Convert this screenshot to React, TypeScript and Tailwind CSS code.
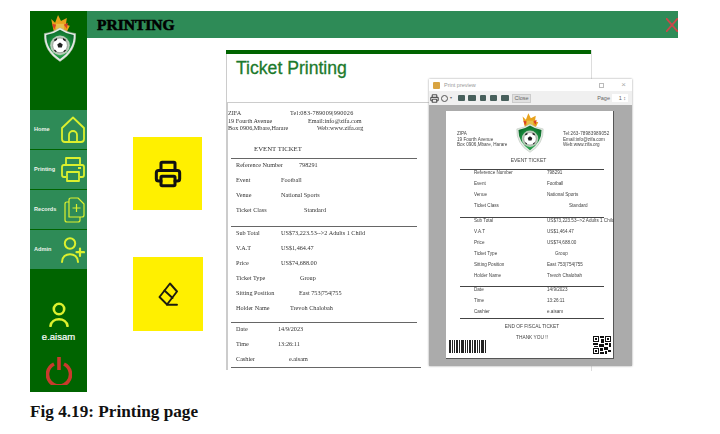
import React from "react";
import { Printer } from "lucide-react";

function Logo({ className }: { className: string }) {
  return (
    <svg viewBox="0 0 34 48" className={className}>
      <defs>
        <radialGradient id="shieldFill" cx="50%" cy="62%" r="62%">
          <stop offset="0%" stopColor="#8fd89a" />
          <stop offset="50%" stopColor="#1f9a45" />
          <stop offset="100%" stopColor="#0c6a2a" />
        </radialGradient>
      </defs>
      <path d="M10 14 L8 4 L12 8 L15 0 L18 6 L24 3 L23 10 L27 11 L24 17 H11 Z" fill="#e8a21c" />
      <path d="M9 9 L13 10 L11 15 Z M25 8 L21 10 L24 14 Z" fill="#d9402a" />
      <path d="M13 9 h8 v9 h-8 Z" fill="#e6c04a" />
      <path d="M1 19 Q9 18 17 13 Q25 18 33 19 Q34 37 17 47.5 Q0 37 1 19 Z" fill="#e4ebe4" stroke="#a8b4a8" strokeWidth="0.5" />
      <path d="M3 20.5 Q10 19.5 17 15 Q24 19.5 31 20.5 Q31.5 35 17 45 Q2.5 35 3 20.5 Z" fill="url(#shieldFill)" />
      <circle cx="17" cy="31" r="10" fill="#b9cbb9" />
      <circle cx="17" cy="31" r="7.5" fill="#ffffff" stroke="#444" strokeWidth="0.4" />
      <path d="M17 28 l2.8 2 -1 3.2 h-3.6 l-1 -3.2 Z M11.5 27 l2.6 -1.6 -0.4 -1.8 -2.8 1.6 Z M22.5 27 l-2.6 -1.6 0.4 -1.8 2.8 1.6 Z M12 35.5 l1.6 1.6 -0.8 1 -2.2 -2.2 Z M22 35.5 l-1.6 1.6 0.8 1 2.2 -2.2 Z" fill="#222" />
    </svg>
  );
}

const navStroke = "#dcf02e";

function HomeIcon() {
  return (
    <svg viewBox="0 0 24 27" className="w-6 h-[27px]" fill="none" stroke={navStroke} strokeWidth="1.8" strokeLinejoin="round">
      <path d="M1 12 L12 1.5 L23 12 V23 Q23 26 20 26 H4 Q1 26 1 23 Z" />
      <path d="M8 26 V19 A4 4 0 0 1 16 19 V26" />
    </svg>
  );
}
function PrintIcon() {
  return (
    <svg viewBox="0 0 24 25" className="w-6 h-[25px]" fill="none" stroke={navStroke} strokeWidth="1.8" strokeLinejoin="round">
      <path d="M5 8 V1 H19 V8" />
      <path d="M5 20 H3 Q1 20 1 18 V10 Q1 8 3 8 H21 Q23 8 23 10 V18 Q23 20 21 20 H19" />
      <path d="M6 15 H18 V24 H6 Z" />
      <path d="M17 11 H20" strokeWidth="2" />
    </svg>
  );
}
function FilesIcon() {
  return (
    <svg viewBox="0 0 21 26" className="w-[21px] h-[26px]" fill="none" stroke={navStroke} strokeWidth="1.2" strokeLinejoin="round">
      <path d="M5 20 V3 Q5 1 7 1 H14 L20 7 V18 Q20 20 18 20 Z" />
      <path d="M5 5 H3 Q1 5 1 7 V23 Q1 25 3 25 H14 Q16 25 16 23 V20" />
      <path d="M12.5 7 V15 M8.5 11 H16.5" />
    </svg>
  );
}
function AdminIcon() {
  return (
    <svg viewBox="0 0 24 26" className="w-6 h-[26px]" fill="none" stroke={navStroke} strokeWidth="2" strokeLinecap="round">
      <circle cx="9" cy="6.5" r="5.2" />
      <path d="M1 25 C1 14.5 17 14.5 17 25" />
      <path d="M19 11.5 V19 M15.5 15.2 H23" strokeWidth="2.2" />
    </svg>
  );
}
function EraserIcon() {
  return (
    <svg viewBox="0 0 20 24" className="w-5 h-6" fill="none" stroke="#1c1c10" strokeWidth="1.9" strokeLinejoin="round" strokeLinecap="round">
      <path d="M12 1.5 L19 9.5 L9 22.5 L1.5 15 Z" />
      <path d="M6.5 8.5 L14.5 16" />
      <path d="M9 22.8 H19" />
    </svg>
  );
}

const nav = [
  { label: "Home", icon: <HomeIcon />, cls: "mt-0" },
  { label: "Printing", icon: <PrintIcon />, cls: "mt-px" },
  { label: "Records", icon: <FilesIcon />, cls: "mt-px" },
  { label: "Admin", icon: <AdminIcon />, cls: "mt-px" },
];

type Row = { l: string; v: string; w: string; t?: string };

const sections: { rows: Row[]; cls: string }[] = [
  {
    rows: [
      { l: "Reference Number", v: "798291", w: "w-[63px]" },
      { l: "Event", v: "Football", w: "w-[45px]" },
      { l: "Venue", v: "National Sports", w: "w-[45px]" },
      { l: "Ticket Class", v: "Standard", w: "w-[68px]" },
    ],
    cls: "h-[68px]",
  },
  {
    rows: [
      { l: "Sub Total", v: "US$73,223.53-->2 Adults 1 Child", w: "w-[45px]" },
      { l: "V.A.T", v: "US$1,464.47", w: "w-[45px]" },
      { l: "Price", v: "US$74,688.00", w: "w-[45px]" },
      { l: "Ticket Type", v: "Group", w: "w-[64px]" },
      { l: "Sitting Position", v: "East 753|754|755", w: "w-[63px]" },
      { l: "Holder Name", v: "Trevoh Chalobah", w: "w-[54px]" },
    ],
    cls: "h-[96px]",
  },
  {
    rows: [
      { l: "Date", v: "14/9/2023", w: "w-[42px]" },
      { l: "Time", v: "13:26:11", w: "w-[42px]" },
      { l: "Cashier", v: "e.aisam", w: "w-[53px]" },
    ],
    cls: "h-[45px]",
  },
];

const previewSections: { rows: Row[]; cls: string }[] = [
  {
    cls: "h-[48px]",
    rows: [
      { l: "Reference Number", v: "798291", w: "w-[73px]" },
      { l: "Event", v: "Football", w: "w-[73px]" },
      { l: "Venue", v: "National Sports", w: "w-[73px]" },
      { l: "Ticket Class", v: "Standard", w: "w-[95px]" },
    ],
  },
  {
    cls: "h-[69px]",
    rows: [
      { l: "Sub Total", v: "US$73,223.53-->2 Adults 1 Child", w: "w-[73px]", t: "tracking-[0.01px]" },
      { l: "V.A.T", v: "US$1,464.47", w: "w-[73px]" },
      { l: "Price", v: "US$74,688.00", w: "w-[73px]" },
      { l: "Ticket Type", v: "Group", w: "w-[81px]" },
      { l: "Sitting Position", v: "East 753|754|755", w: "w-[73px]" },
      { l: "Holder Name", v: "Trevoh Chalobah", w: "w-[73px]" },
    ],
  },
  {
    cls: "h-[32px]",
    rows: [
      { l: "Date", v: "14/9/2023", w: "w-[73px]" },
      { l: "Time", v: "13:26:11", w: "w-[73px]" },
      { l: "Cashier", v: "e.aisam", w: "w-[73px]" },
    ],
  },
];

const barWidths = [2, 1, 1, 2, 1, 3, 1, 1, 2, 1, 2, 1, 1, 3, 1];

function Qr() {
  return (
    <svg viewBox="0 0 18 18" className="w-[18px] h-[18px]" shapeRendering="crispEdges">
      <path fill="#111" d="M0 0h6v6H0Z M12 0h6v6h-6Z M0 12h6v6H0Z M7 0h4v2H7Z M8 3h3v4H8Z M0 7h5v2H0Z M6 8h5v3H6Z M12 7h3v2h-3Z M16 7h2v4h-2Z M7 12h3v3H7Z M11 11h4v3h-4Z M15 14h3v2h-3Z M7 16h4v2H7Z M12 15h2v3h-2Z M1 10h4v1H1Z" />
      <path fill="#fff" d="M1 1h4v4H1Z M13 1h4v4h-4Z M1 13h4v4H1Z" />
      <path fill="#111" d="M2 2h2v2H2Z M14 2h2v2h-2Z M2 14h2v2H2Z" />
    </svg>
  );
}

function PrintPreview() {
  return (
    <div className="absolute left-[203px] top-[29px] w-[203px] h-[287px] flex flex-col bg-[#ababab] font-['Liberation_Sans',sans-serif] shadow-[0_0_2px_#999] blur-[0.3px]">
      <div className="h-3 bg-white flex items-center px-1 text-[5.5px] text-[#999] shrink-0">
        <span className="w-[7px] h-[7px] bg-[#d9a441] mr-1 rounded-[1px]" />
        <span className="flex-1">Print preview</span>
        <span className="w-[5px] h-[5px] border border-[#bbb] mr-[17px]" />
        <span className="text-[#aaa] text-[8px] leading-none mr-0.5">×</span>
      </div>
      <div className="h-[14px] bg-[#f0f0f0] flex items-center pl-px text-[5.5px] text-[#666] shrink-0">
        <Printer size={9} color="#555" strokeWidth={3} />
        <span className="w-[7px] h-[7px] rounded-full border border-[#555] ml-[2px]" />
        <span className="ml-[2px] mr-[6px] text-[4px]">▾</span>
        <span className="w-[7px] h-[6px] bg-[#48605c] rounded-[1px]" />
        <span className="w-2 h-[6px] bg-[#48605c] rounded-[1px] ml-[3px]" />
        <span className="w-[6px] h-[6px] bg-[#48605c] rounded-[1px] ml-1" />
        <span className="w-[7px] h-[6px] bg-[#48605c] rounded-[1px] ml-1" />
        <span className="w-2 h-[6px] bg-[#48605c] rounded-[1px] ml-1" />
        <span className="w-[19px] h-[9px] bg-[#e1e1e1] border border-[#ccc] leading-[7px] text-center ml-[3px]">Close</span>
        <span className="ml-auto">Page</span>
        <span className="w-4 h-[8px] bg-white text-right pr-0.5 leading-[8px] mr-[4px] ml-0.5">1 ↕</span>
      </div>
      <div className="ml-[17px] mt-[6px] w-[168px] h-[248px] bg-white border-r border-b border-[#555] relative text-[4.6px] leading-[5.5px] text-[#444] flex flex-col">
        <div className="h-[45px] flex justify-between items-start pl-[11px] pt-[20px]">
          <div>
            <div>ZIPA</div>
            <div>19 Fourth Avenue</div>
            <div>Box 0906,Mbare, Harare</div>
          </div>
          <div className="w-[50px] whitespace-nowrap">
            <div className="tracking-[0.1px]">Tel:263-78983989052</div>
            <div>Email:info@zifa.com</div>
            <div>Web:www.zifa.org</div>
          </div>
        </div>
        <Logo className="absolute left-[70px] top-[2px] w-[28px] h-10" />
        <div className="text-center pt-[2px] pr-0.5 text-[5px] h-[13px]">EVENT TICKET</div>
        {previewSections.map((s, i) => (
          <div key={i} className={`${s.cls} ml-[14px] w-[144px] border-t border-[#444] pl-[14px]`}>
            {s.rows.map((r) => (
              <div key={r.l} className="flex h-[11px] whitespace-nowrap">
                <span className={`${r.w} shrink-0`}>{r.l}</span>
                <span className={r.t}>{r.v}</span>
              </div>
            ))}
          </div>
        ))}
        <div className="ml-[14px] w-[144px] border-t border-[#444] text-center pt-[5px] text-[4.8px]">
          <div className="h-[11px]">END OF FISCAL TICKET</div>
          <div>THANK YOU !!</div>
        </div>
        <div className="absolute left-[3px] bottom-[5px] flex gap-[1.2px] h-[13px]">
          {barWidths.map((w, i) => (
            <span key={i} className="h-full bg-[#222]" style={{ width: w * 0.9 }} />
          ))}
        </div>
        <div className="absolute right-[2px] bottom-[4px]">
          <Qr />
        </div>
      </div>
    </div>
  );
}

export default function App() {
  return (
    <div className="w-[720px] h-[434px] bg-white overflow-hidden pt-[11px] pl-[30px] blur-[0.35px]">
      <div className="flex w-[648px] h-[381px]">
        <aside className="w-[57px] bg-[#006400] flex flex-col shrink-0 overflow-hidden">
          <div className="h-[99px] flex justify-center pt-1 shrink-0 pl-0.5">
            <Logo className="w-[34px] h-[47px]" />
          </div>
          {nav.map((n) => (
            <div key={n.label} className={`${n.cls} h-[39px] bg-[#2e8b57] flex items-center justify-between pl-1 pr-0.5 shrink-0`}>
              <span className="text-[5.6px] font-bold text-[#eef5ee] font-['Liberation_Sans',sans-serif]">{n.label}</span>
              {n.icon}
            </div>
          ))}
          <div className="flex flex-col items-center mt-[33px]">
            <svg viewBox="0 0 20 25" className="w-5 h-[25px]" fill="none" stroke="#dcf02e" strokeWidth="2.6" strokeLinecap="round">
              <circle cx="10" cy="7" r="5.2" />
              <path d="M1.5 24 C2.5 15 17.5 15 18.5 24" />
            </svg>
            <span className="text-white text-[9.5px] leading-[11px] mt-[4px] font-['Liberation_Sans',sans-serif] [-webkit-text-stroke:0.2px_white]">e.aisam</span>
            <svg viewBox="0 0 26 28" className="w-[26px] h-7 mt-[15px]" fill="none" stroke="#c93a2c" strokeWidth="3.6">
              <path d="M8 7 A11.5 11.5 0 1 0 18 7" />
              <path d="M13 0 V13" />
            </svg>
          </div>
        </aside>
        <div className="flex-1 flex flex-col min-w-0">
          <header className="h-[27px] bg-[#2e8b57] flex items-center justify-between pl-[10px] shrink-0">
            <h1 className="font-['Liberation_Serif',serif] font-black text-[15.5px] text-black [-webkit-text-stroke:0.6px_black]">PRINTING</h1>
            <svg viewBox="0 0 12 14" className="w-3 h-[14px]" stroke="#c8484a" strokeWidth="1.8" fill="none">
              <path d="M0 0 L12 14 M12 0 L0 14" />
            </svg>
          </header>
          <div className="flex flex-1 min-h-0">
            <div className="w-[139px] pl-[46px] pt-[99px] flex flex-col shrink-0">
              <div className="w-[69px] h-[73px] bg-[#fff000] flex items-center justify-center">
                <Printer size={28} color="#111" strokeWidth={2.6} />
              </div>
              <div className="w-[70px] h-[74px] mt-[47px] bg-[#fff000] flex items-center justify-center">
                <EraserIcon />
              </div>
            </div>
            <div className="relative mt-3 w-[366px] h-[321px] border-r border-[#ddd]">
              <div className="h-1 bg-[#006400]" />
              <div className="h-[49px] pl-[9px] pt-[3px] border-b border-[#ccc] border-l">
                <h2 className="font-['Liberation_Sans',sans-serif] font-medium text-[17.6px] leading-[22px] text-[#1c7a2c] [-webkit-text-stroke:0.3px_#1c7a2c]">Ticket Printing</h2>
              </div>
              <div className="border-l-2 border-[#ccc] h-[267px] font-['Liberation_Serif',serif] text-[6.2px] text-[#333] blur-[0.3px]">
                <div className="h-[55px] pt-[6px] leading-[7.7px] flex whitespace-nowrap">
                  <div className="w-[62px]">
                    <div>ZIFA</div>
                    <div>19 Fourth Avenue</div>
                    <div>Box 0906,Mbare,Harare</div>
                  </div>
                  <div>
                    <div className="tracking-[0.2px]">Tel:083-789009|990026</div>
                    <div className="pl-[18px]">Email:info@zifa.com</div>
                    <div className="pl-[27px]">Web:www.zifa.org</div>
                  </div>
                </div>
                <div className="text-[6.8px] ml-[26px] -mt-[14px] h-[14px] leading-[10px]">EVENT  TICKET</div>
                {sections.map((s, i) => (
                  <div key={i} className={`${s.cls} ml-[3px] w-[186px] border-t border-[#666] pl-[5px] pt-[1px]`}>
                    {s.rows.map((r) => (
                      <div key={r.l} className="flex h-[15px] whitespace-nowrap leading-[10px]">
                        <span className={r.w}>{r.l}</span>
                        <span>{r.v}</span>
                      </div>
                    ))}
                  </div>
                ))}
                <div className="ml-[3px] w-[190px] border-t border-[#666]" />
              </div>
              <PrintPreview />
            </div>
          </div>
        </div>
      </div>
      <p className="mt-[11px] font-['Liberation_Serif',serif] font-bold text-[17.2px] leading-[18px] text-[#111]">Fig 4.19: Printing page</p>
    </div>
  );
}
